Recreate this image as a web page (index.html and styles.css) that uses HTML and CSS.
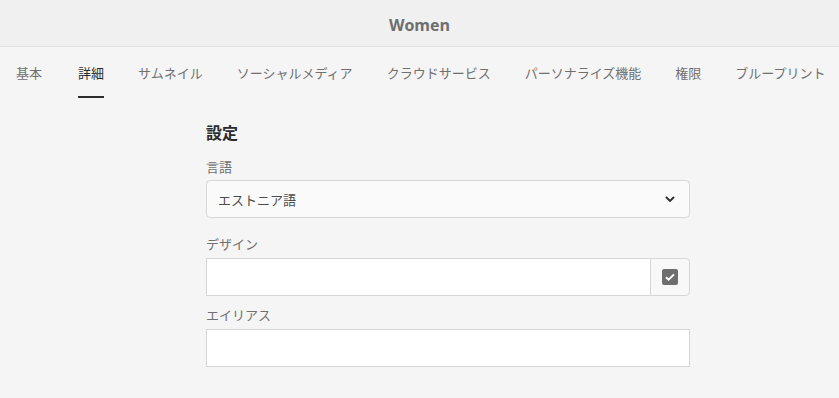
FILE: index.html
```html
<!DOCTYPE html>
<html lang="ja">
<head>
    <meta charset="UTF-8">
    <title>Women</title>
    <link rel="stylesheet" href="styles.css">
</head>
<body>
    <header class="title-bar">
        <h1>Women</h1>
    </header>

    <nav class="tabs">
        <a class="tab">基本</a>
        <a class="tab active">詳細</a>
        <a class="tab">サムネイル</a>
        <a class="tab">ソーシャルメディア</a>
        <a class="tab">クラウドサービス</a>
        <a class="tab">パーソナライズ機能</a>
        <a class="tab">権限</a>
        <a class="tab">ブループリント</a>
    </nav>

    <main class="form-wrap">
        <h2>設定</h2>

        <label class="field-label first">言語</label>
        <div class="select-box">
            <span>エストニア語</span>
            <svg class="chevron" width="10" height="6" viewBox="0 0 10 6">
                <path d="M1 1l4 4 4-4" fill="none" stroke="#2c2c2c" stroke-width="1.8"/>
            </svg>
        </div>

        <label class="field-label">デザイン</label>
        <div class="input-group">
            <input type="text" class="text-input">
            <button class="picker-btn">
                <svg width="16" height="16" viewBox="0 0 16 16">
                    <rect width="16" height="16" rx="2" fill="#6e6e6e"/>
                    <path d="M4 8.2l2.6 2.5L12 5.4" fill="none" stroke="#fff" stroke-width="2"/>
                </svg>
            </button>
        </div>

        <label class="field-label alias-label">エイリアス</label>
        <input type="text" class="text-input alias">

        <h3 class="next-section">Translation Drafting</h3>
    </main>
</body>
</html>
```

FILE: styles.css
```css
html, body {
    height: 100%;
}
body {
    margin: 0;
    background: #f5f5f5;
    font-family: "Noto Sans CJK JP", "Noto Sans", sans-serif;
    color: #6e6e6e;
    overflow: hidden;
}
.title-bar {
    height: 47px;
    box-sizing: border-box;
    padding-top: 4px;
    background: #f0f0f0;
    border-bottom: 1px solid #e1e1e1;
    display: flex;
    align-items: center;
    justify-content: center;
}
.title-bar h1 {
    margin: 0;
    font-family: "Open Sans", "Noto Sans", sans-serif;
    font-size: 16px;
    font-weight: 700;
    color: #6e6e6e;
}
.tabs {
    display: flex;
    gap: 34px;
    padding: 0 16px;
    height: 52px;
}
.tab {
    position: relative;
    font-size: 13px;
    line-height: 52px;
    color: #707070;
    white-space: nowrap;
}
.tab:first-child {
    margin-right: 2px;
}
.tab.active {
    color: #2c2c2c;
}
.tab.active::after {
    content: "";
    position: absolute;
    left: 0;
    right: 0;
    bottom: 1px;
    height: 2px;
    background: #2c2c2c;
}
.form-wrap {
    width: 484px;
    margin: 0 0 0 206px;
    display: flex;
    flex-direction: column;
}
.form-wrap h2 {
    margin: 22px 0 0;
    font-size: 16px;
    line-height: 22px;
    font-weight: 700;
    color: #2c2c2c;
}
.field-label {
    font-size: 13px;
    line-height: 18px;
    margin: 12px 0 5px;
    color: #707070;
}
.field-label.first {
    margin: 15px 0 4px;
}
.field-label.alias-label {
    margin-top: 10px;
}
.select-box {
    height: 36px;
    border: 1px solid #d6d6d6;
    border-radius: 4px;
    background: #fafafa;
    display: flex;
    align-items: center;
    justify-content: space-between;
    padding: 0 14px 0 11px;
    font-size: 13px;
    color: #4b4b4b;
}
.select-box + .field-label {
    margin-top: 17px;
}
.input-group {
    display: flex;
    height: 38px;
}
.text-input {
    box-sizing: border-box;
    height: 38px;
    border: 1px solid #d6d6d6;
    background: #fff;
    margin: 0;
    padding: 0 10px;
    font-size: 13px;
}
.input-group .text-input {
    flex: 1;
    border-right: none;
}
.picker-btn {
    width: 40px;
    height: 38px;
    padding: 0;
    border: 1px solid #d6d6d6;
    border-radius: 0 4px 4px 0;
    background: #f8f8f8;
    display: flex;
    align-items: center;
    justify-content: center;
}
.alias {
    width: 100%;
}
.next-section {
    margin: 28px 0 0 -26px;
    font-size: 16px;
    font-weight: 700;
    color: #e6e6e6;
}
```
